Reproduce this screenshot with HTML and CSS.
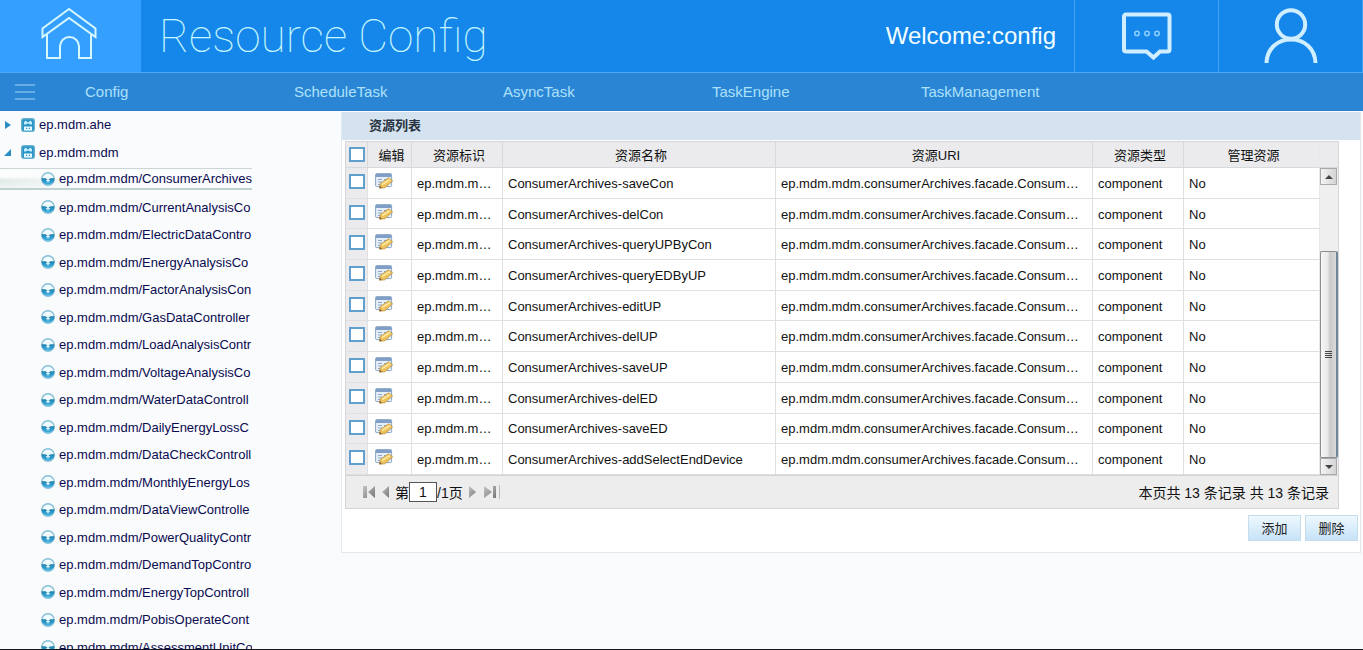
FILE: index.html
```html
<!DOCTYPE html>
<html lang="zh">
<head>
<meta charset="utf-8">
<title>Resource Config</title>
<link rel="stylesheet" href="styles.css">
</head>
<body>
<svg class="defs" aria-hidden="true">
  <defs>
    <linearGradient id="orb" x1="0" y1="0" x2="0" y2="1"><stop offset="0" stop-color="#1f7fae"/><stop offset="1" stop-color="#3fb4e4"/></linearGradient>
    <linearGradient id="metal" x1="0" y1="0" x2="1" y2="1"><stop offset="0" stop-color="#c4c4c4"/><stop offset="1" stop-color="#777"/></linearGradient>
    <symbol id="folder" viewBox="0 0 14 14">
      <rect x=".7" y=".7" width="12.6" height="12.6" rx="2" fill="#2a93c6" stroke="#62b1d1" stroke-width="1.4"/>
      <path d="M3 6.600V4.200L4.500 2.500 7 4.500l2.500-2L11 4.200v2.400H9.400L7 5.600l-2.400 1z" fill="#c5edfa"/>
      <rect x="3" y="8.500" width="8" height="4" fill="#e9fbff"/>
      <path d="M5 10.300h1.200M7.800 10.300H9" stroke="#2d91bd" stroke-width="1.200"/>
    </symbol>
    <symbol id="node" viewBox="0 0 14 14">
      <circle cx="7" cy="7" r="6.200" fill="#f2fbfe" stroke="#86bfd8" stroke-width="1.400"/>
      <path d="M.4 6.200h4.200L7 8l2.400-1.800h4.200a6.600 6.600 0 0 1-13.200 0z" fill="url(#orb)"/>
      <path d="M7 6v4.500M5 8.700h4" stroke="#e6faff"/>
    </symbol>
    <symbol id="edit" viewBox="0 0 18 16">
      <rect x=".6" y=".6" width="16" height="13" rx="1" fill="#e6eff8" stroke="#8ba5c0"/>
      <path d="M1 1h15.200v3H1z" fill="#7f9fc9"/>
      <path d="M3 6.500h4M3 9h4M3 11.500h3M9 6.500h4" stroke="#8ca9c9"/>
      <path d="M4.500 15.200l.8-4.800 8.400-5.600 4 3-7.800 7z" fill="#edc25a" stroke="#c2964a" stroke-width=".8"/>
      <path d="M7 11.500l8-5" stroke="#ffe9a0" stroke-width="1.500"/>
      <path d="M4.500 15.200l.4-2.400 2 2.200z" fill="#775a35"/>
    </symbol>
  </defs>
</svg>
<header class="top">
  <a class="home" href="#" aria-label="Home">
    <svg width="56" height="54" viewBox="0 0 56 54" fill="none" stroke="#d5f8ff" stroke-width="2"><path d="M28 2L1.500 21.500V30L28 11l26.500 19v-8.500z"/><path d="M6 27.500V51h13V39.500a9 9 0 0 1 19 0V51h12V27.500"/></svg>
  </a>
  <h1 class="title">Resource Config</h1>
  <span class="welcome">Welcome:config</span>
  <a class="action" href="#" aria-label="Messages">
    <svg width="52" height="50" viewBox="0 0 52 50" fill="none" stroke="#cfeeff"><path d="M5 3.500h41.500a2 2 0 0 1 2 2v33a2 2 0 0 1-2 2H39l-6.500 6-7-6H5a2 2 0 0 1-2-2v-33a2 2 0 0 1 2-2z" stroke-width="4"/><g stroke="#8dcfff" stroke-width="1.500"><circle cx="16" cy="22.500" r="2.200"/><circle cx="26" cy="22.500" r="2.200"/><circle cx="36" cy="22.500" r="2.200"/></g></svg>
  </a>
  <a class="action" href="#" aria-label="User">
    <svg width="54" height="56" viewBox="0 0 54 56" fill="none" stroke="#cfeeff" stroke-width="4"><circle cx="27" cy="16.500" r="14.200"/><path d="M2.500 55C3 41 13 31.500 27 31.500S51 41 51.500 55"/></svg>
  </a>
</header>
<nav class="menu">
  <button class="burger" type="button" aria-label="Menu"><i></i><i></i><i></i></button>
  <a href="#">Config</a><a href="#">ScheduleTask</a><a href="#">AsyncTask</a><a href="#">TaskEngine</a><a href="#">TaskManagement</a>
</nav>
<main class="content">
  <aside class="side">
    <ul class="tree">
      <li class="root"><svg class="arrow" viewBox="0 0 6 8"><path d="M0 0l6 4-6 4z"/></svg><svg class="ico"><use href="#folder"/></svg><a href="#">ep.mdm.ahe</a></li>
      <li class="root"><svg class="arrow" viewBox="0 0 6 8"><path d="M6 1v7H-1z"/></svg><svg class="ico"><use href="#folder"/></svg><a href="#">ep.mdm.mdm</a></li>
      <li class="leaf selected"><svg class="ico"><use href="#node"/></svg><a href="#">ep.mdm.mdm/ConsumerArchives</a></li>
      <li class="leaf"><svg class="ico"><use href="#node"/></svg><a href="#">ep.mdm.mdm/CurrentAnalysisCo</a></li>
      <li class="leaf"><svg class="ico"><use href="#node"/></svg><a href="#">ep.mdm.mdm/ElectricDataContro</a></li>
      <li class="leaf"><svg class="ico"><use href="#node"/></svg><a href="#">ep.mdm.mdm/EnergyAnalysisCo</a></li>
      <li class="leaf"><svg class="ico"><use href="#node"/></svg><a href="#">ep.mdm.mdm/FactorAnalysisCon</a></li>
      <li class="leaf"><svg class="ico"><use href="#node"/></svg><a href="#">ep.mdm.mdm/GasDataController</a></li>
      <li class="leaf"><svg class="ico"><use href="#node"/></svg><a href="#">ep.mdm.mdm/LoadAnalysisContr</a></li>
      <li class="leaf"><svg class="ico"><use href="#node"/></svg><a href="#">ep.mdm.mdm/VoltageAnalysisCo</a></li>
      <li class="leaf"><svg class="ico"><use href="#node"/></svg><a href="#">ep.mdm.mdm/WaterDataControll</a></li>
      <li class="leaf"><svg class="ico"><use href="#node"/></svg><a href="#">ep.mdm.mdm/DailyEnergyLossC</a></li>
      <li class="leaf"><svg class="ico"><use href="#node"/></svg><a href="#">ep.mdm.mdm/DataCheckControll</a></li>
      <li class="leaf"><svg class="ico"><use href="#node"/></svg><a href="#">ep.mdm.mdm/MonthlyEnergyLos</a></li>
      <li class="leaf"><svg class="ico"><use href="#node"/></svg><a href="#">ep.mdm.mdm/DataViewControlle</a></li>
      <li class="leaf"><svg class="ico"><use href="#node"/></svg><a href="#">ep.mdm.mdm/PowerQualityContr</a></li>
      <li class="leaf"><svg class="ico"><use href="#node"/></svg><a href="#">ep.mdm.mdm/DemandTopContro</a></li>
      <li class="leaf"><svg class="ico"><use href="#node"/></svg><a href="#">ep.mdm.mdm/EnergyTopControll</a></li>
      <li class="leaf"><svg class="ico"><use href="#node"/></svg><a href="#">ep.mdm.mdm/PobisOperateCont</a></li>
      <li class="leaf"><svg class="ico"><use href="#node"/></svg><a href="#">ep.mdm.mdm/AssessmentUnitCo</a></li>
    </ul>
  </aside>
  <section class="panel">
    <h2 class="panel-title">资源列表</h2>
    <div class="grid">
      <div class="grid-body">
        <div class="table-box">
        <table>
          <colgroup><col class="c-check"><col class="c-edit"><col class="c-id"><col class="c-name"><col class="c-uri"><col class="c-type"><col class="c-manage"></colgroup>
          <thead><tr><th class="check"><input type="checkbox" aria-label="全选"></th><th>编辑</th><th>资源标识</th><th>资源名称</th><th>资源URI</th><th>资源类型</th><th>管理资源</th></tr></thead>
          <tbody>
            <tr><td class="check"><input type="checkbox" aria-label="saveCon"></td><td class="edit"><button type="button" aria-label="编辑"><svg><use href="#edit"/></svg></button></td><td>ep.mdm.mdm</td><td>ConsumerArchives-saveCon</td><td>ep.mdm.mdm.consumerArchives.facade.ConsumerArchives</td><td>component</td><td>No</td></tr>
            <tr><td class="check"><input type="checkbox" aria-label="delCon"></td><td class="edit"><button type="button" aria-label="编辑"><svg><use href="#edit"/></svg></button></td><td>ep.mdm.mdm</td><td>ConsumerArchives-delCon</td><td>ep.mdm.mdm.consumerArchives.facade.ConsumerArchives</td><td>component</td><td>No</td></tr>
            <tr><td class="check"><input type="checkbox" aria-label="queryUPByCon"></td><td class="edit"><button type="button" aria-label="编辑"><svg><use href="#edit"/></svg></button></td><td>ep.mdm.mdm</td><td>ConsumerArchives-queryUPByCon</td><td>ep.mdm.mdm.consumerArchives.facade.ConsumerArchives</td><td>component</td><td>No</td></tr>
            <tr><td class="check"><input type="checkbox" aria-label="queryEDByUP"></td><td class="edit"><button type="button" aria-label="编辑"><svg><use href="#edit"/></svg></button></td><td>ep.mdm.mdm</td><td>ConsumerArchives-queryEDByUP</td><td>ep.mdm.mdm.consumerArchives.facade.ConsumerArchives</td><td>component</td><td>No</td></tr>
            <tr><td class="check"><input type="checkbox" aria-label="editUP"></td><td class="edit"><button type="button" aria-label="编辑"><svg><use href="#edit"/></svg></button></td><td>ep.mdm.mdm</td><td>ConsumerArchives-editUP</td><td>ep.mdm.mdm.consumerArchives.facade.ConsumerArchives</td><td>component</td><td>No</td></tr>
            <tr><td class="check"><input type="checkbox" aria-label="delUP"></td><td class="edit"><button type="button" aria-label="编辑"><svg><use href="#edit"/></svg></button></td><td>ep.mdm.mdm</td><td>ConsumerArchives-delUP</td><td>ep.mdm.mdm.consumerArchives.facade.ConsumerArchives</td><td>component</td><td>No</td></tr>
            <tr><td class="check"><input type="checkbox" aria-label="saveUP"></td><td class="edit"><button type="button" aria-label="编辑"><svg><use href="#edit"/></svg></button></td><td>ep.mdm.mdm</td><td>ConsumerArchives-saveUP</td><td>ep.mdm.mdm.consumerArchives.facade.ConsumerArchives</td><td>component</td><td>No</td></tr>
            <tr><td class="check"><input type="checkbox" aria-label="delED"></td><td class="edit"><button type="button" aria-label="编辑"><svg><use href="#edit"/></svg></button></td><td>ep.mdm.mdm</td><td>ConsumerArchives-delED</td><td>ep.mdm.mdm.consumerArchives.facade.ConsumerArchives</td><td>component</td><td>No</td></tr>
            <tr><td class="check"><input type="checkbox" aria-label="saveED"></td><td class="edit"><button type="button" aria-label="编辑"><svg><use href="#edit"/></svg></button></td><td>ep.mdm.mdm</td><td>ConsumerArchives-saveED</td><td>ep.mdm.mdm.consumerArchives.facade.ConsumerArchives</td><td>component</td><td>No</td></tr>
            <tr><td class="check"><input type="checkbox" aria-label="addSelectEndDevice"></td><td class="edit"><button type="button" aria-label="编辑"><svg><use href="#edit"/></svg></button></td><td>ep.mdm.mdm</td><td>ConsumerArchives-addSelectEndDevice</td><td>ep.mdm.mdm.consumerArchives.facade.ConsumerArchives</td><td>component</td><td>No</td></tr>
          </tbody>
        </table>
        </div>
        <div class="scroll">
          <div class="scroll-head"></div>
          <button class="scroll-btn" type="button" aria-label="Up"><svg width="8" height="4" viewBox="0 0 8 4"><path d="M0 4l4-4 4 4z" fill="#444"/></svg></button>
          <div class="scroll-track"><div class="scroll-thumb"><i></i><i></i><i></i><i></i></div></div>
          <button class="scroll-btn" type="button" aria-label="Down"><svg width="8" height="4" viewBox="0 0 8 4"><path d="M0 0h8L4 4z" fill="#444"/></svg></button>
        </div>
      </div>
      <div class="pager">
        <button type="button" aria-label="第一页"><svg width="13" height="14" viewBox="0 0 13 14" fill="url(#metal)"><path d="M0 1h4v12H0zM12 1v12L5 7z"/></svg></button>
        <button class="prev" type="button" aria-label="上一页"><svg width="7" height="14" viewBox="0 0 7 14" fill="url(#metal)"><path d="M7 1v12L0 7z"/></svg></button>
        <label for="page">第</label><input id="page" type="text" value="1"><span>/1页</span>
        <button class="next" type="button" aria-label="下一页"><svg width="7" height="14" viewBox="0 0 7 14" fill="url(#metal)"><path d="M0 1v12l7-6z"/></svg></button>
        <button class="last" type="button" aria-label="最后一页"><svg width="13" height="14" viewBox="0 0 13 14" fill="url(#metal)"><path d="M9 1h3v12H9zM0 1v12l8-6z"/></svg></button>
        <span class="total">本页共 13 条记录 共 13 条记录</span>
      </div>
    </div>
    <div class="buttons"><button type="button">添加</button><button type="button">删除</button></div>
  </section>
</main>
</body>
</html>
```
FILE: styles.css
```css
* { box-sizing: border-box; }
body {
  margin: 0;
  height: 100vh;
  display: flex;
  flex-direction: column;
  overflow: hidden;
  background: #f9fbfc;
  border-bottom: 1px solid #15171c;
  font: 13px "Liberation Sans", "Noto Sans CJK SC", sans-serif;
  color: #111;
}
button, input { font: inherit; color: inherit; margin: 0; }
button { padding: 0; border: 0; background: none; }
a { color: inherit; text-decoration: none; }
svg { display: block; flex: none; }
.defs { position: absolute; width: 0; height: 0; }

.top {
  display: flex;
  flex: none;
  align-items: stretch;
  height: 73px;
  background: #1587ea;
  border-bottom: 1px solid #4ba9f4;
}
.home {
  width: 141px;
  padding: 7px 0 0 41px;
  background: #359fff;
}
.title {
  margin: 0 0 0 18px;
  flex: 1;
  white-space: nowrap;
  font: 100 46px/72px Roboto, sans-serif;
  color: #c6f7ff;
}
.welcome {
  padding-right: 18px;
  font-size: 24px;
  line-height: 72px;
  color: #f2fdff;
}
.action {
  width: 144px;
  display: flex;
  justify-content: center;
  align-items: center;
  border-left: 1px solid #42a3f3;
}
.action:last-child { width: 145px; border-right: 1px solid #42a3f3; }

.menu {
  flex: none;
  display: flex;
  align-items: center;
  height: 38px;
  padding-left: 15px;
  background: #2a86d5;
  border-bottom: 1px solid #2b7dc5;
  font-size: 15px;
  color: #aee0fa;
}
.menu a { width: 209px; }
.burger {
  width: 20px;
  margin-right: 50px;
  display: grid;
  gap: 5px;
}
.burger i { height: 2px; background: #67ade6; }

.content { flex: 1; min-height: 0; display: flex; }
.side { flex: none; width: 341px; overflow: hidden; }
.tree {
  width: 252px;
  margin: 0;
  padding: 0;
  list-style: none;
  overflow: hidden;
  white-space: nowrap;
  color: #0a0a50;
}
.tree li { display: flex; align-items: center; height: 28px; }
.tree li.root:first-child { height: 27px; }
.tree .leaf:nth-child(odd) { height: 27px; }
.root { padding-left: 5px; gap: 4px; }
.root .arrow { width: 6px; height: 8px; margin-right: 6px; fill: #2c8cc4; overflow: visible; }
.leaf { padding-left: 41px; gap: 4px; }
.ico { width: 14px; height: 14px; }
.tree .leaf.selected {
  height: 22px;
  margin: 2px 0 3px;
  border-top: 1px solid #c9d6d5;
  border-bottom: 2px solid #c0d2d0;
  background: linear-gradient(90deg, transparent, #f9fbfc 30%), linear-gradient(#fcfdfd 40%, #dfeae6 60%, #edf4f2);
}

.panel {
  flex: 1;
  min-width: 0;
  align-self: flex-start;
  margin: 1px 2px 0 0;
  background: #fff;
  border: 1px solid #e2e9ee;
  border-top: 0;
}
.panel-title {
  margin: 0 0 1px;
  padding-left: 27px;
  background: #d5e2ef;
  font-size: 13px;
  line-height: 28px;
  color: #27333f;
}
.grid { margin: 0 21px 0 3px; border: 1px solid #d5d5d7; }
.grid-body { display: flex; }
.table-box { flex: 1; min-width: 0; }
table {
  width: 100%;
  height: 333px;
  table-layout: fixed;
  border-collapse: separate;
  border-spacing: 0;
}
.c-check { width: 22px; }
.c-edit { width: 44px; }
.c-id, .c-type { width: 91px; }
.c-name { width: 273px; }
.c-manage { width: 136px; }
th {
  height: 26px;
  padding: 0 0 0 4px;
  background: #ebebed;
  border: solid #d8d9dc;
  border-width: 0 1px 1px 0;
  font-weight: normal;
}
td {
  padding: 1px 9px 0 5px;
  border: solid #e0e0e2;
  border-width: 0 1px 1px 0;
  overflow: hidden;
  white-space: nowrap;
  text-overflow: ellipsis;
}
td.check, td.edit { vertical-align: top; }
td.check { padding: 6px 0 0 3px; background: #ebebed; }
th.check { padding: 0 0 0 3px; }
td.edit { padding: 5px 7px 0; }
td:last-child, th:last-child { border-right-color: #e8e8ea; }
td.edit svg { width: 18px; height: 16px; }
input[type="checkbox"] {
  display: block;
  appearance: none;
  width: 16px;
  height: 15px;
  border: 2px solid #619fce;
  background: #fff;
}
.scroll { width: 18px; display: flex; flex-direction: column; background: #efeff0; }
.scroll-head { height: 26px; background: #ebebed; border-bottom: 1px solid #d8d9dc; }
.scroll-btn {
  height: 17px;
  margin-right: 1px;
  display: flex;
  align-items: center;
  justify-content: center;
  border: 1px solid #a9a9ab;
  background: linear-gradient(90deg, #f4f4f4, #d4d4d6);
}
.scroll-track { flex: 1; display: flex; align-items: flex-end; }
.scroll-thumb {
  width: 100%;
  height: 76%;
  display: flex;
  flex-direction: column;
  align-items: center;
  justify-content: center;
  gap: 1px;
  border: 1px solid #8c8e93;
  border-right: 2px solid #6f8796;
  border-radius: 2px;
  background: linear-gradient(90deg, #f7f7f7, #e9e9ea 45%, #cacacc 60%, #dadadb);
}
.scroll-thumb i { width: 7px; height: 1px; background: #444; }

.pager {
  display: flex;
  align-items: center;
  height: 33px;
  padding: 0 9px 0 17px;
  background: #ededee;
  border-top: 1px solid #d2d2d4;
  font-size: 14px;
}
.prev { margin: 0 6px; }
.pager input {
  width: 28px;
  height: 20px;
  padding: 0;
  border: 1px solid #555;
  background: #fff;
  text-align: center;
}
.next { margin: 0 8px 0 6px; }
.last { padding-right: 2px; border-right: 1px solid #bbb; }
.total { margin-left: auto; }
.buttons { display: flex; justify-content: flex-end; gap: 4px; padding: 6px 2px 11px; }
.buttons button {
  width: 53px;
  height: 26px;
  padding-bottom: 2px;
  border: 1px solid #c5ddec;
  background: linear-gradient(#eef8fe, #c6e3f7);
  color: #222;
}
```
